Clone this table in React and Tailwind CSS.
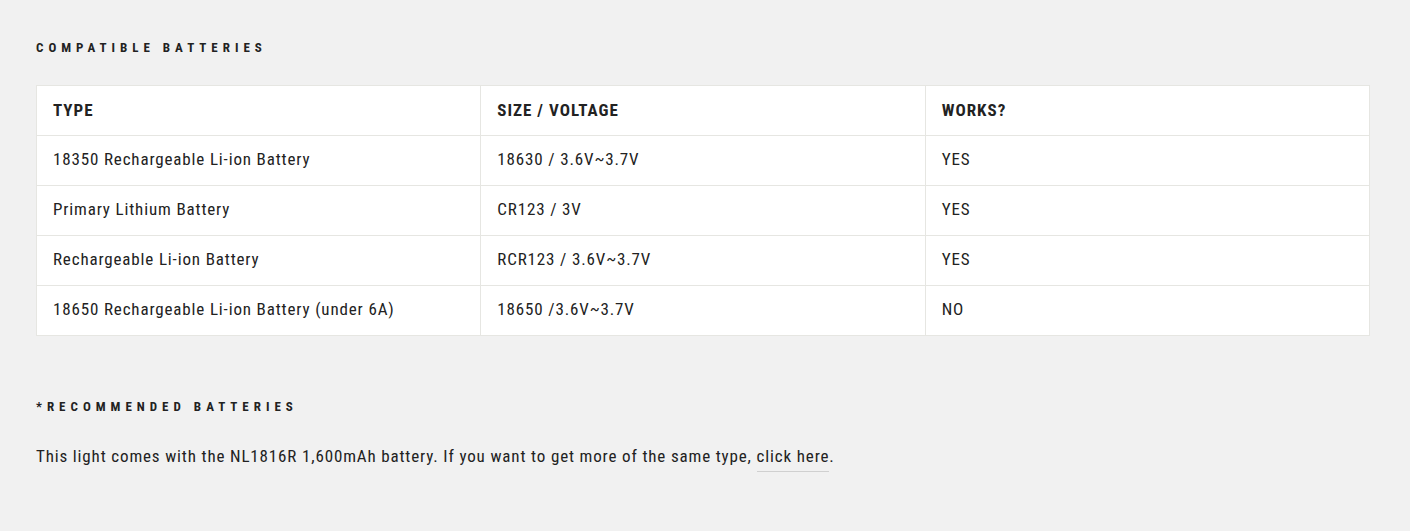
const rows = [
  ["18350 Rechargeable Li-ion Battery", "18630 / 3.6V~3.7V", "YES"],
  ["Primary Lithium Battery", "CR123 / 3V", "YES"],
  ["Rechargeable Li-ion Battery", "RCR123 / 3.6V~3.7V", "YES"],
  ["18650 Rechargeable Li-ion Battery (under 6A)", "18650 /3.6V~3.7V", "NO"],
]

export default function App() {
  return (
    <div className="min-h-[531px] bg-[#f1f1f1] pl-9 pr-10 pt-[40px] text-[#222] font-['Roboto',sans-serif] font-stretch-condensed">
      <h3 className="text-[13px] font-bold tracking-[5px] uppercase leading-[16px]">
        Compatible Batteries
      </h3>

      <table className="mt-[29px] w-full table-fixed border-collapse bg-white text-[17px] tracking-[0.85px]">
        <thead>
          <tr>
            <th className="h-[50px] border border-[#e6e6e2] px-4 text-left font-bold uppercase tracking-[1px]">Type</th>
            <th className="h-[50px] border border-[#e6e6e2] px-4 text-left font-bold uppercase tracking-[1px]">Size / Voltage</th>
            <th className="h-[50px] border border-[#e6e6e2] px-4 text-left font-bold uppercase tracking-[1px]">Works?</th>
          </tr>
        </thead>
        <tbody>
          {rows.map((r) => (
            <tr key={r[0]}>
              {r.map((c, i) => (
                <td key={i} className="h-[50px] border border-[#e6e6e2] px-4 pb-px font-normal">
                  {c}
                </td>
              ))}
            </tr>
          ))}
        </tbody>
      </table>

      <h3 className="mt-[63px] text-[13px] font-bold tracking-[5px] uppercase leading-[16px]">
        *Recommended Batteries
      </h3>

      <p className="mt-[28px] text-[17px] leading-[26px] tracking-[0.85px]">
        This light comes with the NL1816R 1,600mAh battery. If you want to get more of the same type,{" "}
        <a href="#" className="border-b border-[#d0d0d0] pb-[5px]">click here</a>.
      </p>
    </div>
  )
}
